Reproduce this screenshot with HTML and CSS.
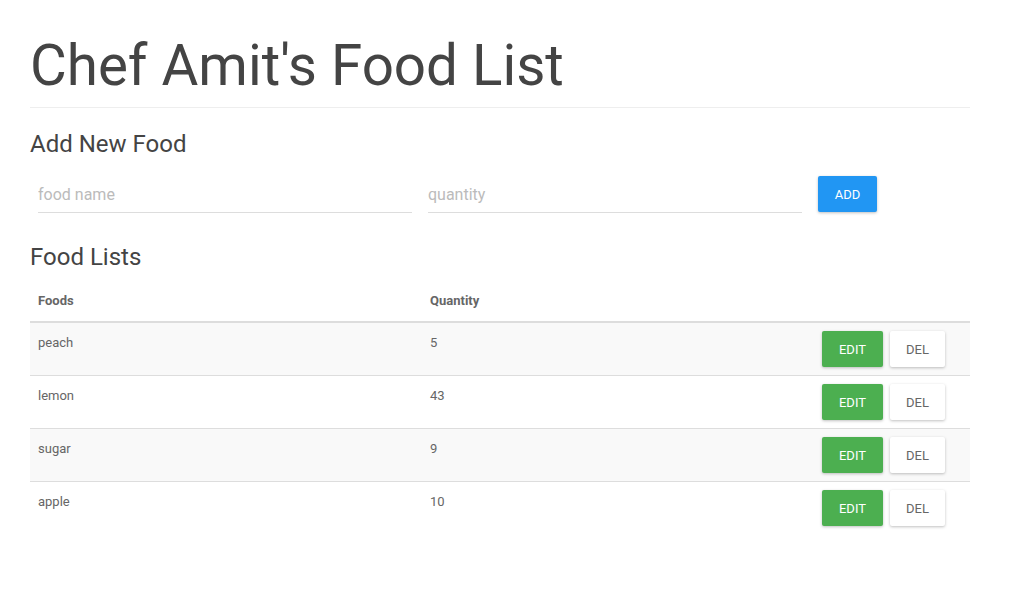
FILE: index.html
```html
<!DOCTYPE html>
<html>
<head>
<meta charset="utf-8">
<link rel="stylesheet" href="styles.css">
</head>
<body>
<div class="container">
  <h1 class="title">Chef Amit's Food List</h1>
  <hr class="rule">
  <h3 class="section">Add New Food</h3>
  <form class="add-form">
    <input class="field" type="text" placeholder="food name">
    <input class="field" type="text" placeholder="quantity">
    <button type="button" class="btn btn-blue">Add</button>
  </form>
  <h3 class="section lists">Food Lists</h3>
  <table class="foods">
    <thead>
      <tr><th class="c-name">Foods</th><th class="c-qty">Quantity</th><th></th></tr>
    </thead>
    <tbody>
      <tr><td>peach</td><td>5</td><td class="c-act"><div class="acts"><button class="btn btn-green">Edit</button><button class="btn btn-white">Del</button></div></td></tr>
      <tr><td>lemon</td><td>43</td><td class="c-act"><div class="acts"><button class="btn btn-green">Edit</button><button class="btn btn-white">Del</button></div></td></tr>
      <tr><td>sugar</td><td>9</td><td class="c-act"><div class="acts"><button class="btn btn-green">Edit</button><button class="btn btn-white">Del</button></div></td></tr>
      <tr><td>apple</td><td>10</td><td class="c-act"><div class="acts"><button class="btn btn-green">Edit</button><button class="btn btn-white">Del</button></div></td></tr>
    </tbody>
  </table>
</div>
</body>
</html>
```

FILE: styles.css
```css
html, body {
  margin: 0;
  padding: 0;
  background: #fff;
  font-family: Roboto, "Liberation Sans", sans-serif;
  color: #444;
}
.container {
  width: 940px;
  padding: 0 30px;
}
.title {
  margin: 0;
  padding-top: 34px;
  font-size: 56.5px;
  font-weight: 400;
  line-height: 64px;
  color: #444;
}
.rule {
  margin: 9px 0 0;
  border: 0;
  border-top: 1px solid #eee;
}
.section {
  margin: 22px 0 0;
  font-size: 24px;
  font-weight: 400;
  line-height: 28px;
  color: #444;
}
.add-form {
  display: flex;
  align-items: flex-end;
  margin-top: 18px;
  padding-left: 8px;
}
.field {
  width: 374px;
  height: 37px;
  box-sizing: border-box;
  margin: 0 16px 0 0;
  padding: 0;
  border: 0;
  border-bottom: 1px solid #ddd;
  font-family: Roboto, "Liberation Sans", sans-serif;
  font-size: 16px;
  color: #444;
  outline: none;
  background: transparent;
}
.field::placeholder { color: #bbb; }
.btn {
  height: 36px;
  border: 0;
  border-radius: 2px;
  padding: 0;
  font-family: Roboto, "Liberation Sans", sans-serif;
  font-size: 13px;
  text-transform: uppercase;
  box-shadow: 0 1px 3px rgba(0,0,0,0.25);
  cursor: pointer;
}
.btn-blue { background: #2196f3; color: #fff; width: 59px; margin-bottom: 1px; }
.btn-green { background: #4caf50; color: #fff; width: 61px; }
.btn-white { background: #fff; color: #666; width: 55px; }
.lists { margin-top: 30px; }
.foods {
  width: 100%;
  border-collapse: collapse;
  margin-top: 10px;
  font-size: 13px;
  color: #666;
}
.foods th {
  text-align: left;
  font-weight: 700;
  padding: 8px;
  line-height: 24px;
  border-bottom: 2px solid #ddd;
  color: #666;
}
.foods td {
  padding: 8px;
  line-height: 24px;
  vertical-align: top;
  border-top: 1px solid #ddd;
}
.foods tbody tr:first-child td { border-top: 0; }
.foods tbody tr:nth-child(odd) { background: #f9f9f9; }
.c-name { width: 376px; }
.c-qty { width: 376px; }
.c-act { padding-right: 25px !important; }
.acts {
  display: flex;
  justify-content: flex-end;
  gap: 7px;
}
```
